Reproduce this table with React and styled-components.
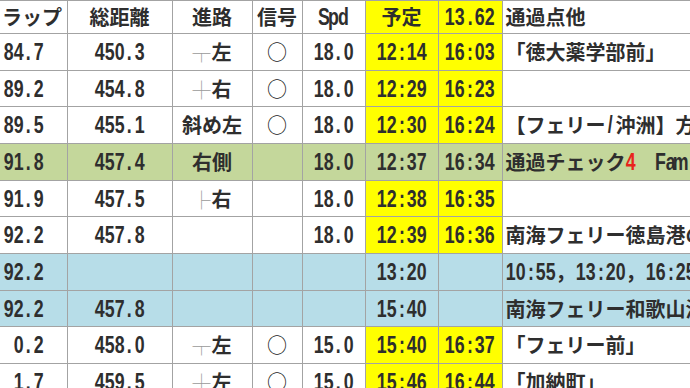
import React from 'react'
import styled, { createGlobalStyle } from 'styled-components'

const GlobalStyle = createGlobalStyle`
  html, body {
    margin: 0;
    padding: 0;
    background: #ffffff;
    overflow: hidden;
  }
  body {
    font-family: "Noto Sans CJK JP", sans-serif;
  }
`

const fills = {
  white: '#ffffff',
  yellow: '#ffff00',
  green: '#c4d79b',
  blue: '#b7dde8',
}

const Sheet = styled.table`
  border-collapse: collapse;
  table-layout: fixed;
  width: 762px;
  font-family: "Noto Sans CJK JP", sans-serif;
  font-size: 20px;
  font-weight: 700;
  color: #2e2e2e;
`
const Row = styled.tr`
  height: ${({ $h }) => $h}px;
`
const Cell = styled.td`
  padding: 0 ${({ $pr }) => $pr}px 0 ${({ $pl }) => $pl}px;
  text-align: ${({ $align }) => $align};
  background: ${({ $bg }) => $bg};
  border: 1px solid #a3a3a3;
  white-space: nowrap;
  overflow: hidden;
  line-height: 1;
  vertical-align: middle;
  &:first-child {
    border-left: none;
  }
`
// the sheet font is a narrow fixed-pitch gothic for latin: every char gets a 10px slot
const NumRun = styled.span`
  font-family: "Liberation Sans", Arial, sans-serif;
  font-size: 24px;
  font-weight: 700;
  color: ${({ $red }) => ($red ? '#e8241c' : 'inherit')};
`
const Slot = styled.span`
  display: inline-flex;
  justify-content: center;
  width: 10px;
`
const Glyph = styled.span`
  display: inline-block;
  transform: scaleX(0.74);
`
const Branch = styled.span`
  color: #9a9a9a;
  font-weight: 300;
  font-size: 18px;
  margin-right: 1px;
`
const Mark = styled.span`
  font-weight: 400;
  color: #222222;
`

const Num = ({ text, red }) => (
  <NumRun $red={red}>
    {[...text].map((ch, i) => (
      <Slot key={i}>
        <Glyph>{ch}</Glyph>
      </Slot>
    ))}
  </NumRun>
)

const columns = [
  { w: 67, align: 'right', pr: 23 },
  { w: 105, align: 'center' },
  { w: 80, align: 'center' },
  { w: 50, align: 'center' },
  { w: 63, align: 'center' },
  { w: 73, align: 'center', hl: true },
  { w: 64, align: 'center', hl: true },
  { w: 260, align: 'left', pl: 3 },
]

// split ascii runs off so they get the narrow slots
const mixed = (text) =>
  text.split(/([\x21-\x7e]+)/).map((part, i) =>
    /^[\x21-\x7e]+$/.test(part) ? <Num key={i} text={part} /> : part
  )

const route = (text) => {
  if (!text) return null
  const first = text[0]
  if ('┬┼├'.includes(first)) {
    return (
      <>
        <Branch>{first}</Branch>
        {text.slice(1)}
      </>
    )
  }
  return text
}

const rows = [
  { h: 37, cells: ['84.7', '450.3', '┬左', '○', '18.0', '12:14', '16:03', '「徳大薬学部前」'] },
  { h: 36, cells: ['89.2', '454.8', '┼右', '○', '18.0', '12:29', '16:23', ''] },
  { h: 37, cells: ['89.5', '455.1', '斜め左', '○', '18.0', '12:30', '16:24', '【フェリー/沖洲】方面'] },
  { h: 37, tone: 'green', cells: ['91.8', '457.4', '右側', '', '18.0', '12:37', '16:34', 'check'] },
  { h: 36, cells: ['91.9', '457.5', '├右', '', '18.0', '12:38', '16:35', ''] },
  { h: 37, cells: ['92.2', '457.8', '', '', '18.0', '12:39', '16:36', '南海フェリー徳島港の'] },
  { h: 37, tone: 'blue', cells: ['92.2', '', '', '', '', '13:20', '', '10:55，13:20，16:25'] },
  { h: 36, tone: 'blue', cells: ['92.2', '457.8', '', '', '', '15:40', '', '南海フェリー和歌山港'] },
  { h: 37, cells: ['0.2', '458.0', '┬左', '○', '15.0', '15:40', '16:37', '「フェリー前」'] },
  { h: 37, cells: ['1.7', '459.5', '┼左', '○', '15.0', '15:46', '16:44', '「加納町」'] },
]

const header = ['ラップ', '総距離', '進路', '信号', 'Spd', '予定', '13.62', '通過点他']

const renderCell = (value, col) => {
  if (col === 2) return route(value)
  if (col === 3) return value ? <Mark>{value}</Mark> : null
  if (col === 7 && value === 'check') {
    return (
      <>
        通過チェック
        <Num text="4" red />
        {'\u3000'}
        <Num text="Fam" />
      </>
    )
  }
  return mixed(value)
}

const fillFor = (tone, col) => {
  if (tone) return fills[tone]
  return columns[col].hl ? fills.yellow : fills.white
}

export default function App() {
  return (
    <>
      <GlobalStyle />
      <Sheet>
        <colgroup>
          {columns.map((c, i) => (
            <col key={i} style={{ width: c.w }} />
          ))}
        </colgroup>
        <tbody>
          <Row $h={33}>
            {header.map((label, i) => (
              <Cell
                key={i}
                $align={columns[i].align}
                $pl={columns[i].pl ?? 2}
                $pr={i === 0 ? 14 : columns[i].pr ?? 2}
                $bg={fillFor(null, i)}
              >
                {mixed(label)}
              </Cell>
            ))}
          </Row>
          {rows.map((row, r) => (
            <Row key={r} $h={row.h}>
              {row.cells.map((value, i) => (
                <Cell
                  key={i}
                  $align={columns[i].align}
                  $pl={columns[i].pl ?? 2}
                  $pr={columns[i].pr ?? 2}
                  $bg={fillFor(row.tone, i)}
                >
                  {renderCell(value, i)}
                </Cell>
              ))}
            </Row>
          ))}
        </tbody>
      </Sheet>
    </>
  )
}
